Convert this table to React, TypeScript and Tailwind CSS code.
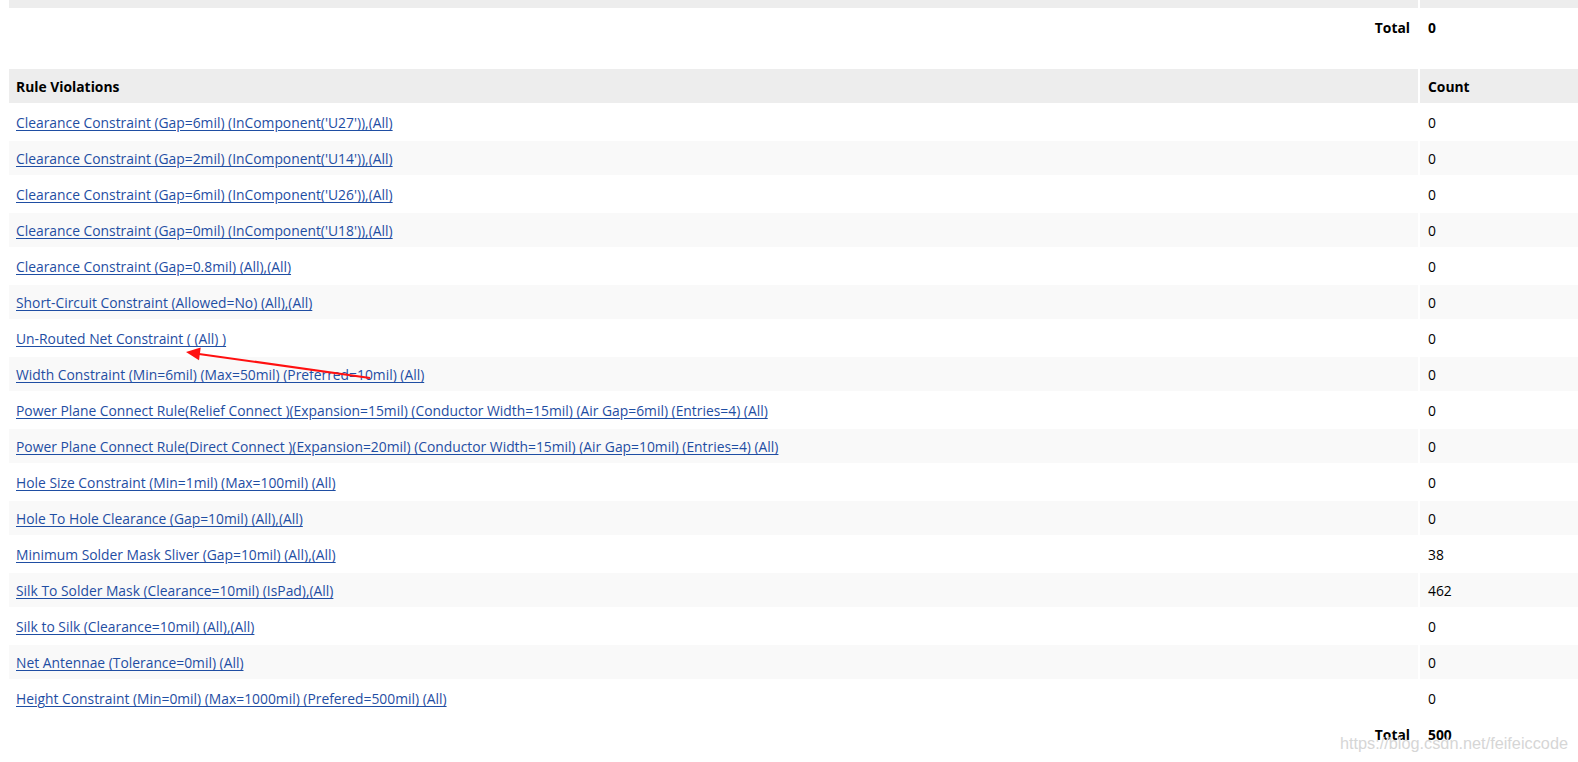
import React from "react";

const rows: [string, string][] = [
  ["Clearance Constraint (Gap=6mil) (InComponent('U27')),(All)", "0"],
  ["Clearance Constraint (Gap=2mil) (InComponent('U14')),(All)", "0"],
  ["Clearance Constraint (Gap=6mil) (InComponent('U26')),(All)", "0"],
  ["Clearance Constraint (Gap=0mil) (InComponent('U18')),(All)", "0"],
  ["Clearance Constraint (Gap=0.8mil) (All),(All)", "0"],
  ["Short-Circuit Constraint (Allowed=No) (All),(All)", "0"],
  ["Un-Routed Net Constraint ( (All) )", "0"],
  ["Width Constraint (Min=6mil) (Max=50mil) (Preferred=10mil) (All)", "0"],
  ["Power Plane Connect Rule(Relief Connect )(Expansion=15mil) (Conductor Width=15mil) (Air Gap=6mil) (Entries=4) (All)", "0"],
  ["Power Plane Connect Rule(Direct Connect )(Expansion=20mil) (Conductor Width=15mil) (Air Gap=10mil) (Entries=4) (All)", "0"],
  ["Hole Size Constraint (Min=1mil) (Max=100mil) (All)", "0"],
  ["Hole To Hole Clearance (Gap=10mil) (All),(All)", "0"],
  ["Minimum Solder Mask Sliver (Gap=10mil) (All),(All)", "38"],
  ["Silk To Solder Mask (Clearance=10mil) (IsPad),(All)", "462"],
  ["Silk to Silk (Clearance=10mil) (All),(All)", "0"],
  ["Net Antennae (Tolerance=0mil) (All)", "0"],
  ["Height Constraint (Min=0mil) (Max=1000mil) (Prefered=500mil) (All)", "0"],
];

export default function App() {
  return (
    <div
      className="relative w-[1578px] h-[762px] overflow-hidden bg-white text-black text-[13.85px]"
      style={{ fontFamily: "'Open Sans', 'Noto Sans', sans-serif" }}
    >
      <div className="pl-[7px]">
        <table className="border-separate border-spacing-[2px] w-[1580px] table-fixed mt-[-2px]">
          <colgroup>
            <col className="w-[1409px]" />
            <col />
          </colgroup>
          <tbody>
            <tr>
              <td className="h-[8px] p-0 bg-[#ededed]"></td>
              <td className="h-[8px] p-0 bg-[#ededed]"></td>
            </tr>
            <tr>
              <td className="h-[34px] pt-[3px] pb-0 pr-[8px] text-right font-bold">Total</td>
              <td className="h-[34px] pt-[3px] pb-0 pl-[8px] font-bold">0</td>
            </tr>
          </tbody>
        </table>

        <table className="border-separate border-spacing-[2px] w-[1580px] table-fixed mt-[21px]">
          <colgroup>
            <col className="w-[1409px]" />
            <col />
          </colgroup>
          <tbody>
            <tr className="bg-[#ededed]">
              <td className="h-[34px] pt-[3px] pb-0 pl-[7px] font-bold">Rule Violations</td>
              <td className="h-[34px] pt-[3px] pb-0 pl-[8px] font-bold">Count</td>
            </tr>
            {rows.map(([name, count], i) => (
              <tr key={i} className={i % 2 === 1 ? "bg-[#f9f9f9]" : "bg-white"}>
                <td className="h-[34px] pt-[3px] pb-0 pl-[7px] whitespace-nowrap">
                  <a href="#" className="text-[#1f4ea3] underline underline-offset-[2px]">
                    {name}
                  </a>
                </td>
                <td className="h-[34px] pt-[3px] pb-0 pl-[8px]">{count}</td>
              </tr>
            ))}
            <tr>
              <td className="h-[34px] pt-[3px] pb-0 pr-[8px] text-right font-bold">Total</td>
              <td className="h-[34px] pt-[3px] pb-0 pl-[8px] font-bold">500</td>
            </tr>
          </tbody>
        </table>
      </div>

      <svg
        className="absolute left-0 top-0 pointer-events-none"
        width="1578"
        height="762"
        viewBox="0 0 1578 762"
      >
        <line x1="370" y1="378" x2="199" y2="354" stroke="#ff1010" strokeWidth="2.2" />
        <polygon points="186,352 200.7,347.6 199,360.3" fill="#ff1010" />
      </svg>

      <div
        className="absolute right-[10px] top-[734px] text-[16.3px] leading-[18px] text-[#d6d6d6] pointer-events-none"
        style={{ fontFamily: "'Liberation Sans', Arial, sans-serif", textShadow: "0 0 1px #ffffff" }}
      >
        https://blog.csdn.net/feifeiccode
      </div>
    </div>
  );
}
